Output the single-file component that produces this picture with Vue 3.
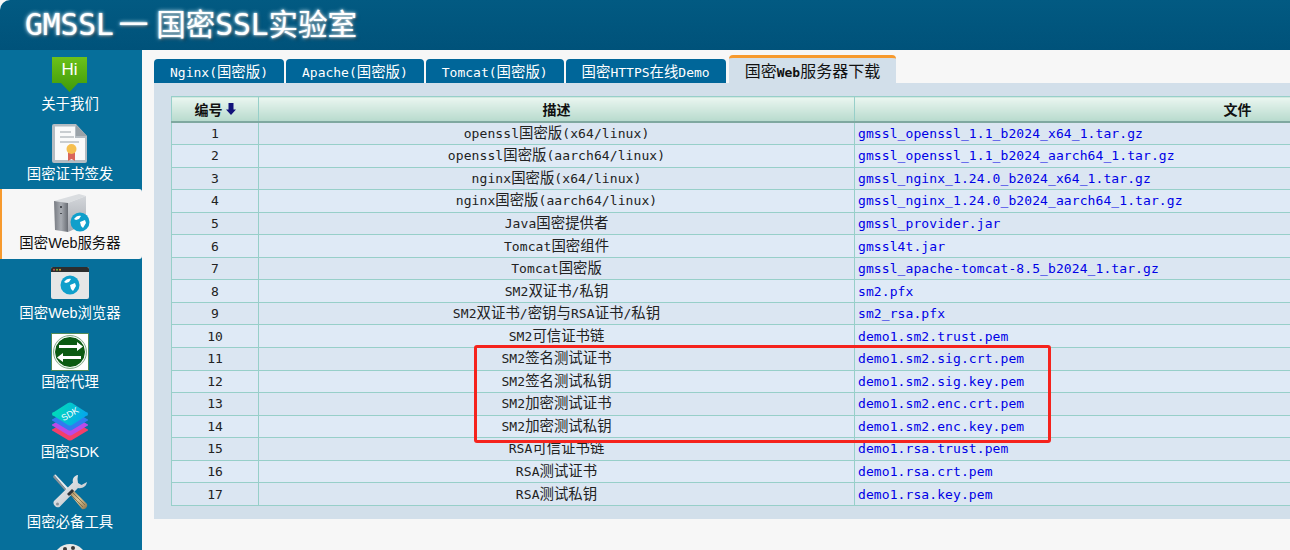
<script setup>
const navItems = [
  { icon: 'hi', label: '关于我们' },
  { icon: 'cert', label: '国密证书签发' },
  { icon: 'server', label: '国密Web服务器', active: true },
  { icon: 'browser', label: '国密Web浏览器' },
  { icon: 'proxy', label: '国密代理' },
  { icon: 'sdk', label: '国密SDK' },
  { icon: 'tools', label: '国密必备工具' },
  { icon: 'palette', label: '' }
]

const tabs = ['Nginx(国密版)', 'Apache(国密版)', 'Tomcat(国密版)', '国密HTTPS在线Demo']

const rows = [
  ['openssl国密版(x64/linux)', 'gmssl_openssl_1.1_b2024_x64_1.tar.gz'],
  ['openssl国密版(aarch64/linux)', 'gmssl_openssl_1.1_b2024_aarch64_1.tar.gz'],
  ['nginx国密版(x64/linux)', 'gmssl_nginx_1.24.0_b2024_x64_1.tar.gz'],
  ['nginx国密版(aarch64/linux)', 'gmssl_nginx_1.24.0_b2024_aarch64_1.tar.gz'],
  ['Java国密提供者', 'gmssl_provider.jar'],
  ['Tomcat国密组件', 'gmssl4t.jar'],
  ['Tomcat国密版', 'gmssl_apache-tomcat-8.5_b2024_1.tar.gz'],
  ['SM2双证书/私钥', 'sm2.pfx'],
  ['SM2双证书/密钥与RSA证书/私钥', 'sm2_rsa.pfx'],
  ['SM2可信证书链', 'demo1.sm2.trust.pem'],
  ['SM2签名测试证书', 'demo1.sm2.sig.crt.pem'],
  ['SM2签名测试私钥', 'demo1.sm2.sig.key.pem'],
  ['SM2加密测试证书', 'demo1.sm2.enc.crt.pem'],
  ['SM2加密测试私钥', 'demo1.sm2.enc.key.pem'],
  ['RSA可信证书链', 'demo1.rsa.trust.pem'],
  ['RSA测试证书', 'demo1.rsa.crt.pem'],
  ['RSA测试私钥', 'demo1.rsa.key.pem']
]

// latin and chinese need different sizes, so split the text in runs
function runs(text) {
  return text.match(/[\u4e00-\u9fff]+|[^\u4e00-\u9fff]+/g).map((part) => ({
    part,
    cjk: /[\u4e00-\u9fff]/.test(part)
  }))
}
</script>

<template>
  <div class="page">
    <header class="top">
      <h1>GMSSL<span class="dash">一</span>国密SSL实验室</h1>
    </header>

    <div class="body">
      <nav class="side">
        <a
          v-for="item in navItems"
          :key="item.icon"
          class="nav-item"
          :class="{ active: item.active }"
        >
          <span class="nav-icon">
            <svg v-if="item.icon === 'hi'" class="hi-icon" width="36" height="36" viewBox="0 0 36 36">
              <defs>
                <linearGradient id="hiG" x1="0" y1="0" x2="0" y2="1">
                  <stop offset="0" stop-color="#6cc11a" />
                  <stop offset="1" stop-color="#3f9a08" />
                </linearGradient>
              </defs>
              <path d="M0 0h35v26h-9l-8.500 9-8.500-9H0z" fill="url(#hiG)" />
              <text x="17.500" y="18" class="hi-text" text-anchor="middle">Hi</text>
            </svg>

            <svg v-else-if="item.icon === 'cert'" width="36" height="40" viewBox="0 0 36 40">
              <path d="M2 0h22l11 12v25a2 2 0 0 1-2 2H2a2 2 0 0 1-2-2V2a2 2 0 0 1 2-2z" fill="#b5bcc2" />
              <path d="M3 2.500h20V14h10v22H3z" fill="#fafafa" />
              <path d="M24 1l11 11H24z" fill="#9aa2a8" />
              <rect x="8" y="7" width="11" height="2" fill="#c9cdd0" />
              <rect x="8" y="12" width="14" height="2" fill="#c9cdd0" />
              <rect x="8" y="17" width="19" height="2" fill="#c9cdd0" />
              <path d="M16 28h7v9l-3.500-2-3.500 2z" fill="#d9655a" />
              <circle cx="19.500" cy="25" r="5" fill="#f6bf4f" />
            </svg>

            <svg v-else-if="item.icon === 'server'" class="server-icon" width="36" height="39" viewBox="0 0 36 39">
              <defs>
                <linearGradient id="srvF" x1="0" y1="0" x2="1" y2="0">
                  <stop offset="0" stop-color="#777b82" />
                  <stop offset="0.5" stop-color="#a9adb3" />
                  <stop offset="1" stop-color="#696d74" />
                </linearGradient>
                <linearGradient id="srvS" x1="0" y1="0" x2="0" y2="1">
                  <stop offset="0" stop-color="#d3d6da" />
                  <stop offset="1" stop-color="#a5a9b0" />
                </linearGradient>
              </defs>
              <path d="M0 7L25 0l7 2-18 7z" fill="#dadde0" />
              <path d="M0 7l14 2v29L1 36z" fill="url(#srvF)" />
              <path d="M14 9l18-7v28l-18 8z" fill="url(#srvS)" />
              <rect x="6" y="12" width="2" height="2" fill="#4a4e54" />
              <rect x="6" y="19" width="2" height="1" fill="#4a4e54" />
              <circle cx="26" cy="28" r="9.500" fill="#0f9fcb" />
              <path d="M20 25c2-3 5-4 7-3l-2 3-3 1zM26 28l5-2 1 3-3 5-2-2z" fill="#fff" />
            </svg>

            <svg v-else-if="item.icon === 'browser'" width="38" height="32" viewBox="0 0 38 32">
              <rect width="38" height="32" rx="2" fill="#e6e6e6" />
              <path d="M0 2a2 2 0 0 1 2-2h34a2 2 0 0 1 2 2v3H0z" fill="#2d2d2d" />
              <circle cx="3" cy="2.700" r="1" fill="#d9534f" />
              <circle cx="6" cy="2.700" r="1" fill="#7fb13c" />
              <circle cx="9" cy="2.700" r="1" fill="#e0a030" />
              <circle cx="19" cy="18" r="9.500" fill="#0f9fcb" />
              <path d="M13 15c2-3 5-4 7-3l-2 3-3 1zM19 18l5-2 1 3-3 5-2-2z" fill="#fff" />
            </svg>

            <svg v-else-if="item.icon === 'proxy'" width="38" height="38" viewBox="0 0 38 38">
              <rect x="0.500" y="0.500" width="37" height="37" fill="#fff" stroke="#4f8a57" />
              <circle cx="19" cy="19" r="15.500" fill="#0b5a12" stroke="#fff" stroke-width="1" />
              <circle cx="19" cy="19" r="16.500" fill="none" stroke="#4f8a57" stroke-width="0.700" />
              <path d="M8 14h18v-3l6 4.500-6 4.500v-3H8z" transform="translate(0 -2)" fill="#fff" />
              <path d="M30 24H12v-3l-6 4.500 6 4.500v-3h18z" transform="translate(0 -1)" fill="#fff" />
            </svg>

            <svg v-else-if="item.icon === 'sdk'" width="36" height="40" viewBox="0 0 36 40">
              <defs>
                <linearGradient id="sdkG" x1="0" y1="0" x2="1" y2="0.300">
                  <stop offset="0" stop-color="#00e5b0" />
                  <stop offset="1" stop-color="#05a8ea" />
                </linearGradient>
              </defs>
              <path d="M18 17l17 10a1 1 0 0 1 0 2L20 38q-2 1-4 0L1 29a1 1 0 0 1 0-2z" fill="#f43f6a" />
              <path d="M18 12l17 10a1 1 0 0 1 0 2L20 33q-2 1-4 0L1 24a1 1 0 0 1 0-2z" fill="#b94be8" />
              <path d="M18 7l17 10a1 1 0 0 1 0 2L20 28q-2 1-4 0L1 19a1 1 0 0 1 0-2z" fill="#2f7cf0" />
              <path d="M20 1l14 9a2 2 0 0 1 0 4L20 23q-2 1-4 0L2 14a2 2 0 0 1 0-4L16 1q2-1 4 0z" fill="url(#sdkG)" />
              <text x="18" y="15" class="sdk-text" text-anchor="middle" transform="rotate(-30 18 12)">SDK</text>
            </svg>

            <svg v-else-if="item.icon === 'tools'" width="36" height="36" viewBox="0 0 36 36">
              <defs>
                <linearGradient id="wr" x1="0" y1="0" x2="1" y2="1">
                  <stop offset="0" stop-color="#f4f5f6" />
                  <stop offset="1" stop-color="#b7bcc2" />
                </linearGradient>
                <linearGradient id="hd" x1="0" y1="0" x2="1" y2="1">
                  <stop offset="0" stop-color="#9a835a" />
                  <stop offset="0.500" stop-color="#dcc79a" />
                  <stop offset="1" stop-color="#8a7248" />
                </linearGradient>
              </defs>
              <path d="M2 1l1.500-.5L20 18l-2 2z" fill="#e8eaec" />
              <path d="M2 1l16 19-1 1L1 3z" fill="#8d9298" />
              <path d="M26 1c-4 .5-6 4-5 7.500L2 27c-2 3 2 7.500 5.500 6L26 14c4 1 8.500-1.500 9-6l-5.500 3-3.500-2-.5-4z" fill="url(#wr)" />
              <circle cx="5.500" cy="30" r="1.500" fill="#8d9298" />
              <path d="M17 19l4-3 14 14c1 3-2 6-5 5z" fill="url(#hd)" />
              <path d="M20 18l13 13M18 20l13 13" stroke="#7a6440" stroke-width="0.800" />
              <path d="M15 20l5-5 2 2-5 5z" fill="#30343a" />
            </svg>

            <svg v-else width="34" height="34" viewBox="0 0 34 34">
              <circle cx="17" cy="17" r="17" fill="#e8e8e6" />
              <circle cx="12" cy="5" r="2" fill="#3a3a3a" />
              <circle cx="20" cy="4" r="2" fill="#3a3a3a" />
            </svg>
          </span>
          <span class="nav-label">{{ item.label }}</span>
        </a>
      </nav>

      <main class="content">
        <div class="tabs">
          <a v-for="tab in tabs" :key="tab" class="tab">
            <span v-for="r in runs(tab)" :key="r.part" :class="r.cjk ? 'cjk' : 'lat'">{{ r.part }}</span>
          </a>
          <a class="tab current">
            <span v-for="r in runs('国密Web服务器下载')" :key="r.part" :class="r.cjk ? 'cjk' : 'lat'">{{ r.part }}</span>
          </a>
        </div>

        <div class="panel">
          <div class="table-box">
            <table class="files">
              <colgroup>
                <col class="c-no" />
                <col class="c-desc" />
                <col class="c-file" />
              </colgroup>
              <thead>
                <tr>
                  <th>
                    <span class="no-head">编号<svg class="sort" width="10" height="12" viewBox="0 0 10 12">
                      <path d="M2.500 0h5v6.500H10L5 12 0 6.500h2.500z" fill="#12127a" />
                    </svg></span>
                  </th>
                  <th>描述</th>
                  <th>文件</th>
                </tr>
              </thead>
              <tbody>
                <tr v-for="(row, i) in rows" :key="row[1]">
                  <td class="mid">{{ i + 1 }}</td>
                  <td class="mid desc">
                    <span v-for="r in runs(row[0])" :key="r.part" :class="r.cjk ? 'cjk' : 'lat'">{{ r.part }}</span>
                  </td>
                  <td><a class="link lat">{{ row[1] }}</a></td>
                </tr>
              </tbody>
            </table>
            <div class="mark"></div>
          </div>
        </div>
      </main>
    </div>
  </div>
</template>

<style>
html,
body {
  margin: 0;
  height: 100%;
  overflow: hidden;
  background: #f7f7f7;
}
</style>

<style scoped>
.page {
  width: 1290px;
  height: 550px;
  overflow: hidden;
  background: #f7f7f7;
  display: flex;
  flex-direction: column;
}

.top {
  height: 50px;
  flex: none;
  background: linear-gradient(#025a82, #00527a);
  border-top-left-radius: 10px;
  padding-left: 25px;
  box-sizing: border-box;
}

.top h1 {
  margin: 0;
  font: normal 29.5px/50px "DejaVu Sans Mono", "Noto Sans CJK SC", monospace;
  color: #fff;
  text-shadow: 0 0 4px #d8ecf4, 0 0 2px #d8ecf4, 2px 2px 3px #0a2f40;
  white-space: nowrap;
}

.dash {
  margin: 0 8px 0 5px;
}

.body {
  flex: 1;
  display: flex;
  min-height: 0;
}

.side {
  width: 142px;
  flex: none;
  background: #066f9b;
  display: flex;
  flex-direction: column;
  overflow: hidden;
}

.nav-item {
  flex: none;
  height: 69.6px;
  padding-right: 2px;
  box-sizing: border-box;
  display: flex;
  flex-direction: column;
  align-items: center;
  color: #fff;
  font: 14.4px/20px "Liberation Sans", "Noto Sans CJK SC", sans-serif;
}

.nav-item.active {
  background: #f7f7f7;
  color: #111;
  border-left: 2px solid #f79a2e;
  border-radius: 0 3px 3px 0;
  padding-right: 4px;
}

.nav-icon {
  height: 44px;
  margin-top: 2px;
  display: flex;
  align-items: center;
  justify-content: center;
}

.hi-icon {
  margin-top: 2px;
}

.server-icon {
  margin-left: 3px;
}

.nav-label {
  margin-top: -2px;
}

.hi-text {
  font: 17px "Liberation Sans", sans-serif;
  fill: #fff;
}

.sdk-text {
  font: 9px "Liberation Sans", sans-serif;
  fill: #fff;
}

.content {
  flex: 1;
  min-width: 0;
  padding: 5px 0 0 12px;
}

.tabs {
  display: flex;
  align-items: flex-end;
  gap: 2px;
  height: 28px;
}

.tab {
  height: 24px;
  padding: 0 16px;
  background: #006699;
  color: #fff;
  border-radius: 4px 4px 0 0;
  line-height: 26px;
  white-space: nowrap;
}

.lat {
  font: 13px "DejaVu Sans Mono", monospace;
  letter-spacing: 0.09px;
}

.cjk {
  font: 14.4px "DejaVu Sans Mono", "Noto Sans CJK SC", monospace;
}

.tab .lat {
  letter-spacing: 0;
}

.tab.current {
  height: 25px;
  margin-left: 1px;
  background: #d2dfea;
  color: #111;
  border-top: 3px solid #f79a2e;
  line-height: 25px;
}

.current .cjk {
  font-size: 16px;
}

.current .lat {
  font-weight: 700;
}

.panel {
  background: #d2dfea;
  height: 436px;
  padding: 13px 0 0 17px;
  box-sizing: border-box;
}

.table-box {
  position: relative;
  width: 1500px;
}

.files {
  border-collapse: collapse;
  table-layout: fixed;
  width: 1450px;
  border: 1px solid #fff;
  font: 13px "DejaVu Sans Mono", "Noto Sans CJK SC", monospace;
  color: #222;
}

.c-no {
  width: 87px;
}

.c-desc {
  width: 596px;
}

.files th {
  height: 24px;
  padding: 0;
  font-size: 14px;
  font-weight: 700;
  color: #111;
  background: linear-gradient(#eaf6f0, #b7dacd);
  border: 1px solid #97cfc9;
  border-bottom: 2px solid #7fa8a0;
}

.no-head {
  display: inline-flex;
  align-items: center;
  gap: 3px;
}

.files td {
  height: 22.56px;
  padding: 0 0 0 3px;
  box-sizing: border-box;
  border: 1px solid #97cfc9;
  white-space: nowrap;
}

.files td.mid {
  text-align: center;
  padding: 0;
}

.desc .lat,
.desc .cjk {
  line-height: 16px;
}

.files tbody tr:nth-child(odd) {
  background: #dbe6f2;
}

.files tbody tr:nth-child(even) {
  background: #dfeaf6;
}

.link {
  color: #0000e6;
}

.mark {
  position: absolute;
  left: 303px;
  top: 249px;
  width: 577px;
  height: 98px;
  box-sizing: border-box;
  border: 3px solid #f5231d;
  border-radius: 3px;
}
</style>
